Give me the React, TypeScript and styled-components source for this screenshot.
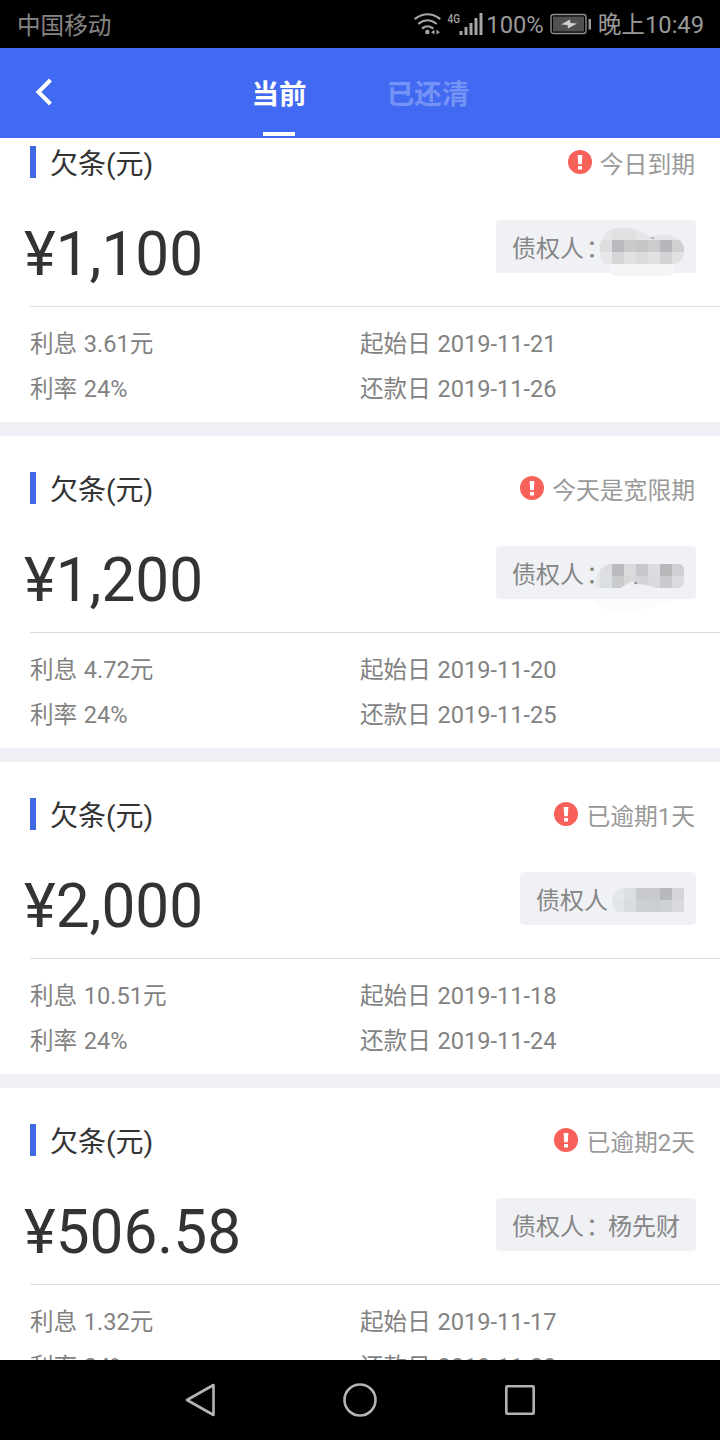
import React from "react";
import styled, { createGlobalStyle } from "styled-components";

const GlobalStyle = createGlobalStyle`
  * { box-sizing: border-box; }
  body {
    margin: 0;
    background: #000;
    font-family: Roboto, "Noto Sans CJK SC", sans-serif;
  }
`;

const Screen = styled.div`
  display: flex;
  flex-direction: column;
  width: 720px;
  height: 1440px;
  overflow: hidden;
  background: #fff;
`;

const StatusBar = styled.div`
  display: flex;
  align-items: center;
  flex: 0 0 48px;
  height: 48px;
  padding: 2px 16px 0 17px;
  background: #000;
  color: #9a9a9a;
  font-size: 23.7px;
  line-height: 46px;
  white-space: nowrap;
`;

const Carrier = styled.span`
  flex: 1;
  padding-top: 2px;
  font-size: 23.6px;
  line-height: 44px;
  color: #858585;
`;

const StatusIcons = styled.svg`
  display: block;
  width: 74px;
  height: 46px;
`;

const BatteryIcon = styled.svg`
  display: block;
  width: 42px;
  height: 46px;
  margin: 0 6px 0 6px;
`;

const Header = styled.div`
  display: flex;
  flex: 0 0 90px;
  background: #4169f1;
`;

const BackButton = styled.button`
  display: flex;
  align-items: center;
  width: 210px;
  padding: 0 0 3px 35px;
  border: 0;
  background: none;
`;

const Tab = styled.div<{ $active?: boolean }>`
  display: flex;
  flex-direction: column;
  align-items: center;
  justify-content: space-between;
  width: ${(p) => (p.$active ? 138 : 160)}px;
  padding-bottom: 2px;
  font-size: 27.5px;
  font-weight: 700;
  line-height: 86px;
  color: ${(p) => (p.$active ? "#fff" : "#7592f6")};
`;

const TabLabel = styled.span`
  height: 84px;
  padding-top: 4px;
`;

const TabLine = styled.span`
  width: 32px;
  height: 4px;
  background: #fff;
`;

const List = styled.div`
  flex: 1;
  min-height: 0;
  overflow: hidden;
  background: #eff0f5;
`;

const Scroller = styled.div`
  display: flex;
  flex-direction: column;
  gap: 14px;
  margin-top: -28px;
`;

const Card = styled.section`
  height: 312px;
  padding-top: 36px;
  background: #fff;
`;

const TitleRow = styled.div`
  display: flex;
  align-items: center;
  height: 32px;
  padding: 0 25px 0 30px;
`;

const TitleMark = styled.span`
  width: 6px;
  height: 32px;
  margin-right: 14px;
  background: #4169e6;
`;

const Title = styled.span`
  flex: 1;
  padding-top: 5px;
  font-size: 28px;
  line-height: 32px;
  color: #333;
`;

const AlertIcon = styled.svg`
  display: block;
  width: 24px;
  height: 24px;
  margin-right: 8px;
`;

const State = styled.span`
  padding-top: 6px;
  font-size: 23.8px;
  line-height: 32px;
  color: #999;
`;

const AmountRow = styled.div`
  display: flex;
  align-items: center;
  justify-content: space-between;
  height: 128px;
  padding: 0 24px;
`;

const Amount = styled.span`
  padding-top: 25px;
  font-size: 60.3px;
  line-height: 72px;
  color: #333;
`;

const Creditor = styled.span`
  position: relative;
  height: 53px;
  margin-top: 9px;
  padding: 4px 16px 0;
  border-radius: 4px;
  background: #eff1f5;
  font-size: 24px;
  line-height: 51px;
  color: #868686;
`;

const Colon = styled.span`
  display: inline-block;
  width: 24px;
  padding-left: 2px;
  white-space: nowrap;
`;

const HiddenName = styled.span<{ $chars: number }>`
  display: inline-block;
  width: ${(p) => p.$chars * 24}px;
`;

const Smudge = styled.svg`
  position: absolute;
  top: 0;
  right: 0;
  width: 110px;
  height: 72px;
`;

const Details = styled.div`
  display: grid;
  grid-template-columns: 330px 1fr;
  grid-auto-rows: 45px;
  margin-left: 30px;
  padding-top: 15px;
  border-top: 1px solid #ddd;
  font-size: 23.6px;
  line-height: 45px;
  word-spacing: 0.8px;
  color: #828282;
`;

const NavBar = styled.div`
  display: flex;
  align-items: center;
  justify-content: center;
  gap: 120px;
  flex: 0 0 80px;
  background: #000;
`;

const NavIcon = styled.svg`
  width: 40px;
  height: 40px;
  fill: none;
  stroke: #b4b4b4;
  stroke-width: 2.6;
  stroke-linejoin: round;
`;

type Cell = [number, number, string, number?, number?];

/* Mosaic cells: x, y, colour, width, height */
const cellsA: Cell[] = [
  [26, 8, "#dfe1e3", 24, 12],
  [14, 20, "#dcdee0"], [26, 20, "#b9babd"], [38, 20, "#c8c9cb"], [50, 20, "#c4c5c7"],
  [62, 20, "#cbccce"], [74, 20, "#b6b7ba"], [86, 20, "#cfd0d2"],
  [14, 32, "#e6e8ea"], [26, 32, "#d4d6d8"], [38, 32, "#dfe1e3"], [50, 32, "#d9dbdd"],
  [62, 32, "#e0e1e3"], [74, 32, "#d2d4d6"], [86, 32, "#dfe1e3"],
];
const cellsB: Cell[] = [
  [8, 16, "#e5e7ea", 8, 28],
  [14, 18, "#dcdee1"], [26, 18, "#babbbe"], [38, 18, "#d9dbdd"], [50, 18, "#c7c8cb"],
  [62, 18, "#dcdde0"], [74, 18, "#b8b8bb"], [86, 18, "#cfd0d3"],
  [14, 30, "#dcdfe1"], [26, 30, "#c9cbcd"], [38, 30, "#d5d7d9"], [50, 30, "#d2d4d7"],
  [62, 30, "#d9dadd"], [74, 30, "#c9cacd"], [86, 30, "#dadbde"],
];
const cellsC: Cell[] = [
  [26, 16, "#e4e7ea"], [38, 16, "#dcdfe2"], [50, 16, "#c8c9cc"], [62, 16, "#cacbce"],
  [74, 16, "#b8b9bc"], [86, 16, "#d5d6d9"],
  [26, 28, "#e2e5e8"], [38, 28, "#dadde0"], [50, 28, "#cdd0d2"], [62, 28, "#cccfd1"],
  [74, 28, "#ced1d3"], [86, 28, "#d8dadd"],
];

const Cells = ({ cells }: { cells: Cell[] }) => (
  <>
    {cells.map(([x, y, fill, w = 12, h = 12], i) => (
      <rect key={i} x={x} y={y} width={w} height={h} fill={fill} />
    ))}
  </>
);

const SmudgeA = () => (
  <Smudge viewBox="0 0 110 72">
    <defs>
      <clipPath id="blobA">
        <path d="M14 32C13 22 18 12 25 9C36 7 46 8 54 11C61 16 66 17 73 15C85 14 95 18 98 27C99 35 96 42 88 44H22C16 42 14 38 14 32Z" />
      </clipPath>
    </defs>
    <path d="M24 44H88V53Q85 56 80 56H32Q27 56 24 52Z" fill="#f4f5f7" />
    <g clipPath="url(#blobA)">
      <rect x="10" y="4" width="92" height="42" fill="#e4e6e8" />
      <Cells cells={cellsA} />
    </g>
    <path d="M65 18h3" stroke="#868686" strokeWidth="1" />
  </Smudge>
);

const SmudgeB = () => (
  <Smudge viewBox="0 0 110 72">
    <defs>
      <clipPath id="blobB">
        <path d="M10 34C12 24 18 18 26 18H94Q98 19 98 24V36Q97 42 92 42H70Q60 38 50 38L46 35L34 42L10 42Z" />
      </clipPath>
    </defs>
    <path d="M7 40H84L84 53H8Z" fill="#f1f2f6" />
    <path d="M7 53H86C76 64 32 69 16 62Q8 58 7 53Z" fill="#fcfcfd" />
    <g clipPath="url(#blobB)">
      <Cells cells={cellsB} />
    </g>
    <path d="M48.500 37.500l2.500-1" stroke="#888" strokeWidth="1.600" />
  </Smudge>
);

const SmudgeC = () => (
  <Smudge viewBox="0 0 110 72">
    <defs>
      <clipPath id="blobC">
        <path d="M98 16V40H32Q26 37 26 29Q27 18 36 16Z" />
      </clipPath>
    </defs>
    <g clipPath="url(#blobC)">
      <Cells cells={cellsC} />
    </g>
  </Smudge>
);

const notes = [
  { amount: "¥1,100", state: "今日到期", colon: true, name: "", Mask: SmudgeA, interest: "3.61", start: "2019-11-21", due: "2019-11-26" },
  { amount: "¥1,200", state: "今天是宽限期", colon: true, name: "", Mask: SmudgeB, interest: "4.72", start: "2019-11-20", due: "2019-11-25" },
  { amount: "¥2,000", state: "已逾期1天", colon: false, name: "", Mask: SmudgeC, interest: "10.51", start: "2019-11-18", due: "2019-11-24" },
  { amount: "¥506.58", state: "已逾期2天", colon: true, name: "杨先财", Mask: null, interest: "1.32", start: "2019-11-17", due: "2019-11-23" },
];

export default function App() {
  return (
    <>
      <GlobalStyle />
      <Screen>
        <StatusBar>
          <Carrier>中国移动</Carrier>
          <StatusIcons viewBox="0 0 74 46">
            <g fill="none" stroke="#a6a6a6" strokeWidth="2.2" strokeLinecap="round">
              <path d="M3.500 16.500Q15.500 8 27.500 16.500" />
              <path d="M7 21.300Q15.500 15.200 24 21.300" />
              <path d="M10.700 26Q15.500 22.500 20.500 26" />
            </g>
            <circle cx="15.300" cy="30" r="2.200" fill="#a6a6a6" />
            <path d="M22.500 27.800v4.800l-3.500-2.400zM24.500 27.800v4.800l3.500-2.400z" fill="#a6a6a6" />
            <text x="35.500" y="20.500" fontFamily="Roboto" fontSize="13" fontWeight="500" textLength="12.500" lengthAdjust="spacingAndGlyphs" fill="#a0a0a0">4G</text>
            <g fill="#a6a6a6">
              <rect x="47.500" y="29" width="3" height="4" />
              <rect x="52.500" y="25" width="3" height="8" />
              <rect x="57.500" y="21" width="3" height="12" />
              <rect x="62.500" y="16" width="3" height="17" />
              <rect x="67.500" y="11" width="3" height="22" />
            </g>
          </StatusIcons>
          <span>100%</span>
          <BatteryIcon viewBox="0 0 42 46">
            <rect x="1" y="12.500" width="35" height="19" rx="2.500" fill="none" stroke="#8f8f8f" strokeWidth="1.400" />
            <rect x="3" y="14.500" width="31" height="15" fill="#505050" />
            <rect x="38.500" y="17" width="2.500" height="10.500" fill="#999" />
            <path d="M11 22.500L20 17.500L20.500 21L27 21.500L18 26.500L17.500 23Z" fill="#d0d0d0" />
          </BatteryIcon>
          <span>晚上10:49</span>
        </StatusBar>
        <Header>
          <BackButton aria-label="返回">
            <svg width="20" height="30" viewBox="0 0 20 30" fill="none" stroke="#fff" strokeWidth="4">
              <path d="M15.500 3L3.500 15L15.500 27" />
            </svg>
          </BackButton>
          <Tab $active>
            <TabLabel>当前</TabLabel>
            <TabLine />
          </Tab>
          <Tab>
            <TabLabel>已还清</TabLabel>
          </Tab>
        </Header>
        <List>
          <Scroller>
            {notes.map(({ Mask, ...n }) => (
              <Card key={n.amount}>
                <TitleRow>
                  <TitleMark />
                  <Title>欠条(元)</Title>
                  <AlertIcon viewBox="0 0 24 24">
                    <circle cx="12" cy="12" r="12" fill="#f8605a" />
                    <path d="M9.600 5h4.800l-.6 9.300h-3.600zM10 16h4v3.500h-4z" fill="#fff" />
                  </AlertIcon>
                  <State>{n.state}</State>
                </TitleRow>
                <AmountRow>
                  <Amount>{n.amount}</Amount>
                  <Creditor>
                    债权人
                    {n.colon && <Colon>：</Colon>}
                    {n.name || <HiddenName $chars={3} />}
                    {Mask && <Mask />}
                  </Creditor>
                </AmountRow>
                <Details>
                  <span>利息 {n.interest}元</span>
                  <span>起始日 {n.start}</span>
                  <span>利率 24%</span>
                  <span>还款日 {n.due}</span>
                </Details>
              </Card>
            ))}
          </Scroller>
        </List>
        <NavBar>
          <NavIcon viewBox="0 0 40 40">
            <path d="M33.500 5V35L7 20Z" />
          </NavIcon>
          <NavIcon viewBox="0 0 40 40">
            <circle cx="20" cy="20" r="15.500" />
          </NavIcon>
          <NavIcon viewBox="0 0 40 40">
            <rect x="6.300" y="6.300" width="27.400" height="27.400" rx="1" />
          </NavIcon>
        </NavBar>
      </Screen>
    </>
  );
}
